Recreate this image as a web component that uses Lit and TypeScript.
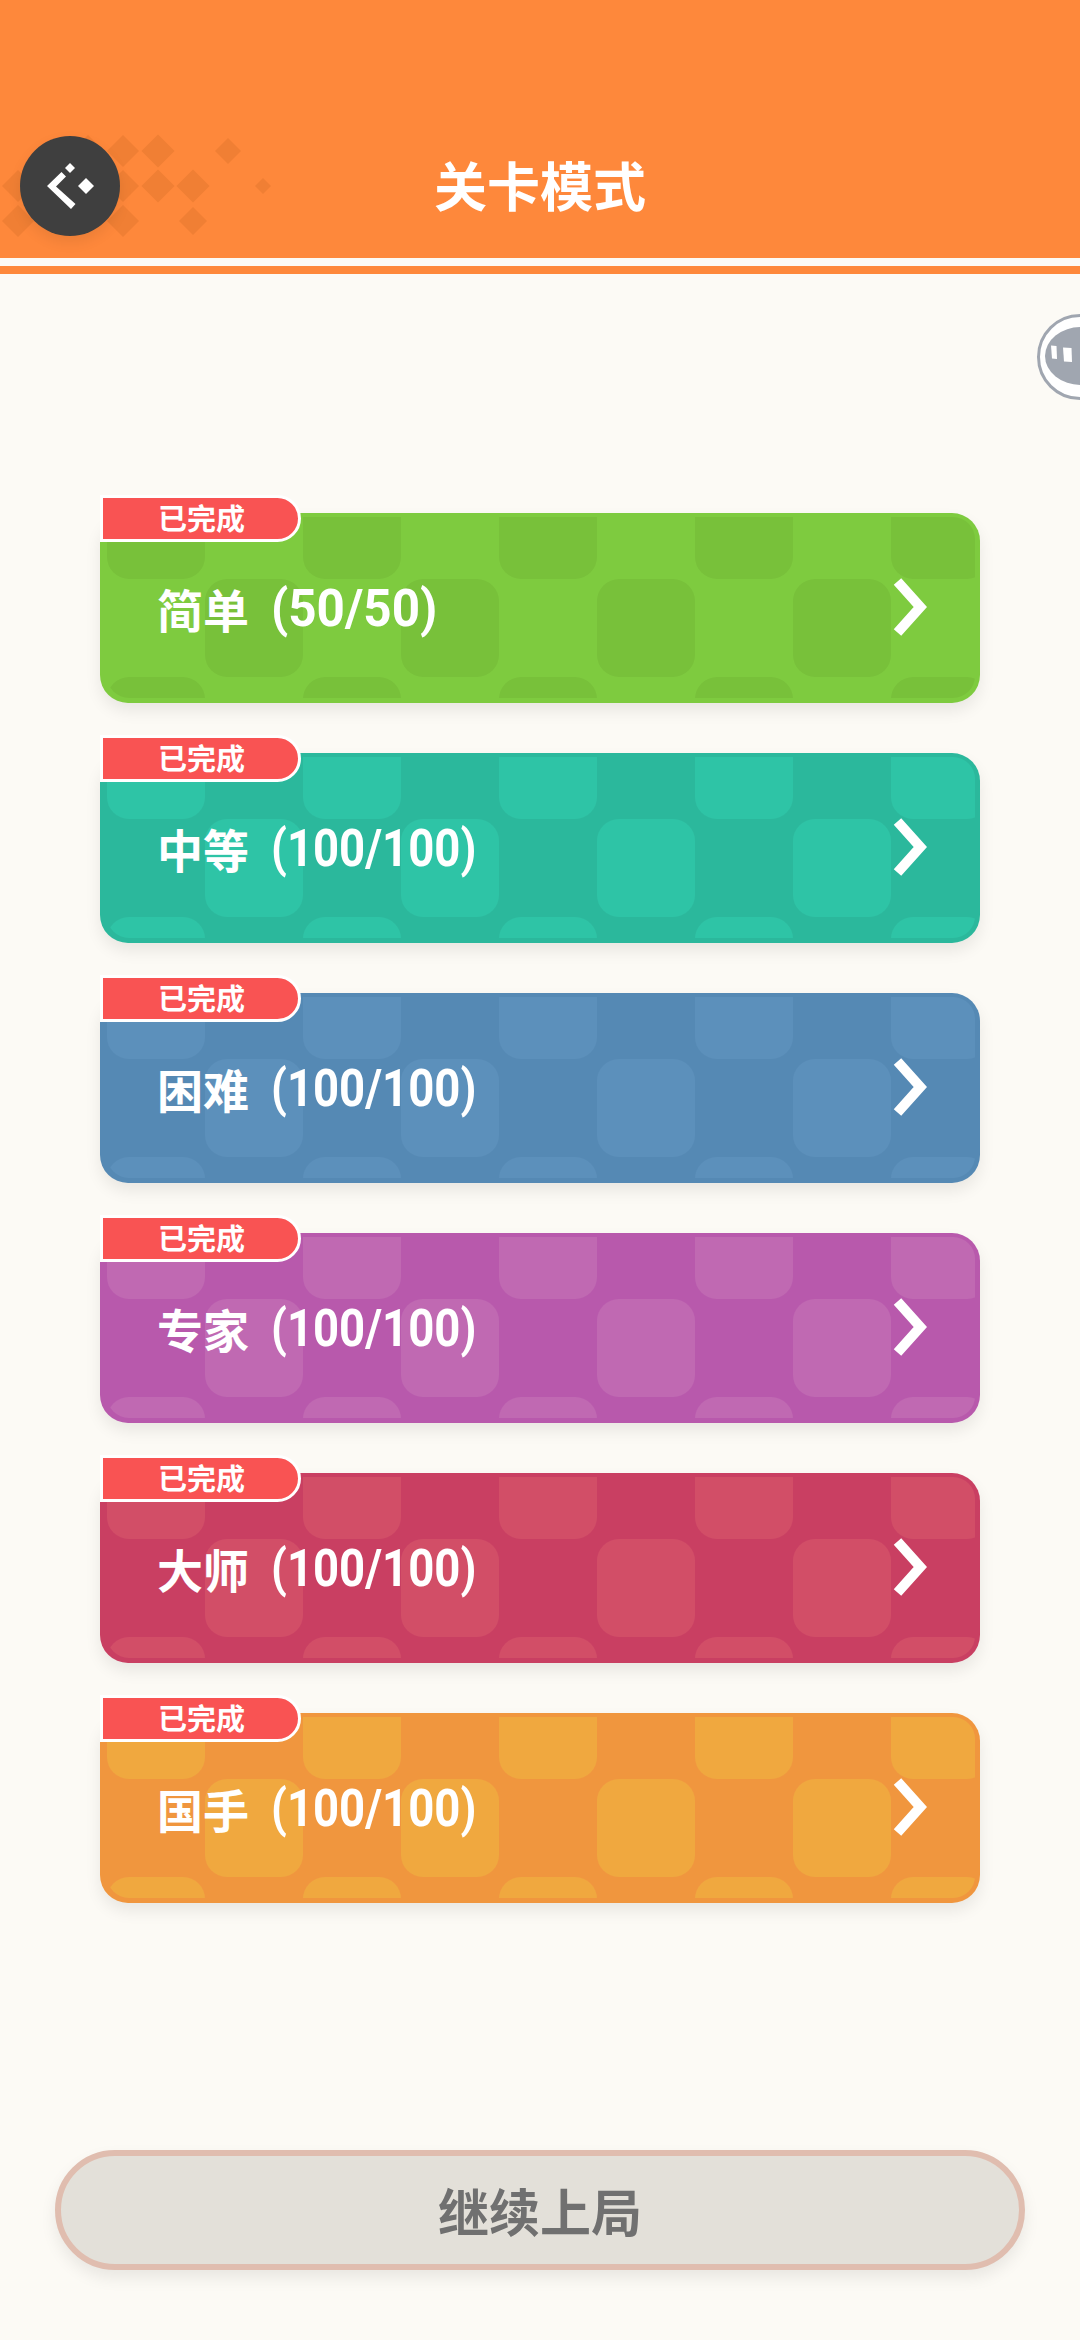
import { LitElement, css, html, svg } from "lit";
import { customElement } from "lit/decorators.js";

interface Level {
  name: string;
  progress: string;
  squeeze: number;
  base: string;
  tile: string;
}

const LEVELS: Level[] = [
  { name: "简单", progress: "(50/50)", squeeze: 0.95, base: "#7ecb3f", tile: "#78c13a" },
  { name: "中等", progress: "(100/100)", squeeze: 0.875, base: "#2bb89c", tile: "#2ec4a6" },
  { name: "困难", progress: "(100/100)", squeeze: 0.875, base: "#5589b4", tile: "#5c90bb" },
  { name: "专家", progress: "(100/100)", squeeze: 0.875, base: "#b859ac", tile: "#c069b2" },
  { name: "大师", progress: "(100/100)", squeeze: 0.875, base: "#c93f62", tile: "#d24e67" },
  { name: "国手", progress: "(100/100)", squeeze: 0.875, base: "#f0963e", tile: "#f0a83f" },
];

// centre x, centre y, half diagonal
const DIAMONDS = [
  [88, 151, 16], [123, 151, 16], [158, 151, 16.5], [228, 151, 13],
  [18, 186, 16], [123, 186, 16], [158, 186, 16.5], [193, 186, 16.5], [263, 186, 8],
  [18, 221, 16], [123, 221, 16], [193, 221, 14],
];

@customElement("app-root")
export class AppRoot extends LitElement {
  private _renderCard(level: Level, index: number) {
    return html`<div class="card" style="background:${level.base}">
      <svg class="tiles">
        <defs>
          <pattern
            id="tiles-${index}"
            x="0"
            y="-36"
            width="196"
            height="196"
            patternUnits="userSpaceOnUse"
          >
            <rect width="98" height="98" rx="22" fill=${level.tile}></rect>
            <rect x="98" y="98" width="98" height="98" rx="22" fill=${level.tile}></rect>
          </pattern>
        </defs>
        <rect width="100%" height="100%" fill="url(#tiles-${index})"></rect>
      </svg>
      <div class="badge">已完成</div>
      <div class="label">
        <span class="name">${level.name}</span>
        <span class="progress" style="transform:scaleX(${level.squeeze})">${level.progress}</span>
      </div>
      <svg class="chevron" width="40" height="62" viewBox="0 0 40 62">
        <polyline
          points="6.5,4.5 29.3,30 6.5,55.5"
          fill="none"
          stroke="#fff"
          stroke-width="10"
        ></polyline>
      </svg>
    </div>`;
  }

  protected render() {
    return html`
      <header class="header">
        <svg class="diamonds" width="300" height="258">
          ${DIAMONDS.map(
            ([x, y, r]) =>
              svg`<polygon points="${x - r},${y} ${x},${y - r} ${x + r},${y} ${x},${y + r}" fill="#f07f34"></polygon>`
          )}
        </svg>
        <button class="back">
          <svg width="100" height="100" viewBox="20 136 100 100">
            <polygon points="47,186 61.5,172 66,176.5 56,186.5 75.5,204 71,209" fill="#fff"></polygon>
            <polygon points="70,163 75,168 70,173 65,168" fill="#fff"></polygon>
            <polygon points="86,178 94,186 86,194 78,186" fill="#fff"></polygon>
          </svg>
        </button>
        <h1 class="title">关卡模式</h1>
      </header>
      <div class="stripe"></div>

      <svg class="helper" width="44" height="90" viewBox="1036 312 44 90">
        <circle cx="1080" cy="357" r="41.5" fill="#fff" stroke="#a0a6b0" stroke-width="3"></circle>
        <ellipse cx="1081" cy="356" rx="36" ry="29" fill="#a0a6b0"></ellipse>
        <polygon points="1051,345.5 1056.5,346 1057,359 1052,358.5" fill="#fff"></polygon>
        <polygon points="1063,347.5 1071.5,348 1072,362 1064,361.5" fill="#fff"></polygon>
      </svg>

      <main class="levels">${LEVELS.map((l, i) => this._renderCard(l, i))}</main>

      <button class="resume">继续上局</button>
    `;
  }

  static styles = css`
    :host {
      display: block;
      position: relative;
      height: 2340px;
      overflow: hidden;
      background: #fcfaf5;
      font-family: "Noto Sans CJK SC", sans-serif;
    }

    .header {
      position: relative;
      height: 258px;
      background: #fe883b;
      display: flex;
      justify-content: center;
      align-items: flex-end;
    }

    .diamonds {
      position: absolute;
      left: 0;
      top: 0;
    }

    .back {
      position: absolute;
      left: 20px;
      top: 136px;
      width: 100px;
      height: 100px;
      padding: 0;
      border: none;
      border-radius: 50%;
      background: #3f3f3f;
      box-shadow: 0 6px 14px rgba(0, 0, 0, 0.08);
    }

    .back svg {
      display: block;
    }

    .title {
      margin: 0 0 36px;
      font-size: 53px;
      line-height: 76px;
      font-weight: 700;
      color: #fff;
    }

    .stripe {
      height: 8px;
      margin-top: 8px;
      background: #fe883b;
    }

    .helper {
      position: absolute;
      left: 1036px;
      top: 312px;
    }

    .levels {
      display: flex;
      flex-direction: column;
      gap: 50px;
      padding: 239px 100px 0;
    }

    .card {
      position: relative;
      box-sizing: border-box;
      height: 190px;
      display: flex;
      align-items: center;
      justify-content: space-between;
      padding: 0 45px 0 53px;
      border-radius: 28px;
      border: 4px solid transparent;
      box-shadow: 0 8px 16px rgba(0, 0, 0, 0.08);
    }

    .tiles {
      position: absolute;
      left: 3px;
      top: 0;
      width: calc(100% - 4px);
      height: calc(100% - 1px);
      border-radius: 0 22px 22px 22px;
    }

    .badge {
      position: absolute;
      left: -4px;
      top: -22px;
      box-sizing: border-box;
      width: 201px;
      height: 47px;
      display: flex;
      align-items: center;
      justify-content: center;
      padding: 0 0 3px 2px;
      border: 3px solid #fff;
      border-radius: 0 24px 24px 0;
      background: #f95353;
      color: #fff;
      font-size: 29px;
      font-weight: 700;
    }

    .label {
      position: relative;
      display: flex;
      align-items: center;
      gap: 22px;
      color: #fff;
      font-weight: 700;
      line-height: 60px;
    }

    .name {
      font-size: 46px;
    }

    .progress {
      display: inline-block;
      margin-top: 2px;
      font-family: Roboto, sans-serif;
      font-size: 52px;
      transform-origin: left center;
    }

    .chevron {
      position: relative;
      display: block;
    }

    .resume {
      display: block;
      box-sizing: border-box;
      width: 970px;
      height: 120px;
      margin: 247px 0 0 55px;
      padding: 0;
      border: 6px solid #e0bdaf;
      border-radius: 60px;
      background: #e3e0d9;
      color: #707070;
      font-family: "Noto Sans CJK SC", sans-serif;
      font-size: 51px;
      font-weight: 700;
      box-shadow: 0 8px 16px rgba(0, 0, 0, 0.08);
    }
  `;
}

declare global {
  interface HTMLElementTagNameMap {
    "app-root": AppRoot;
  }
}
